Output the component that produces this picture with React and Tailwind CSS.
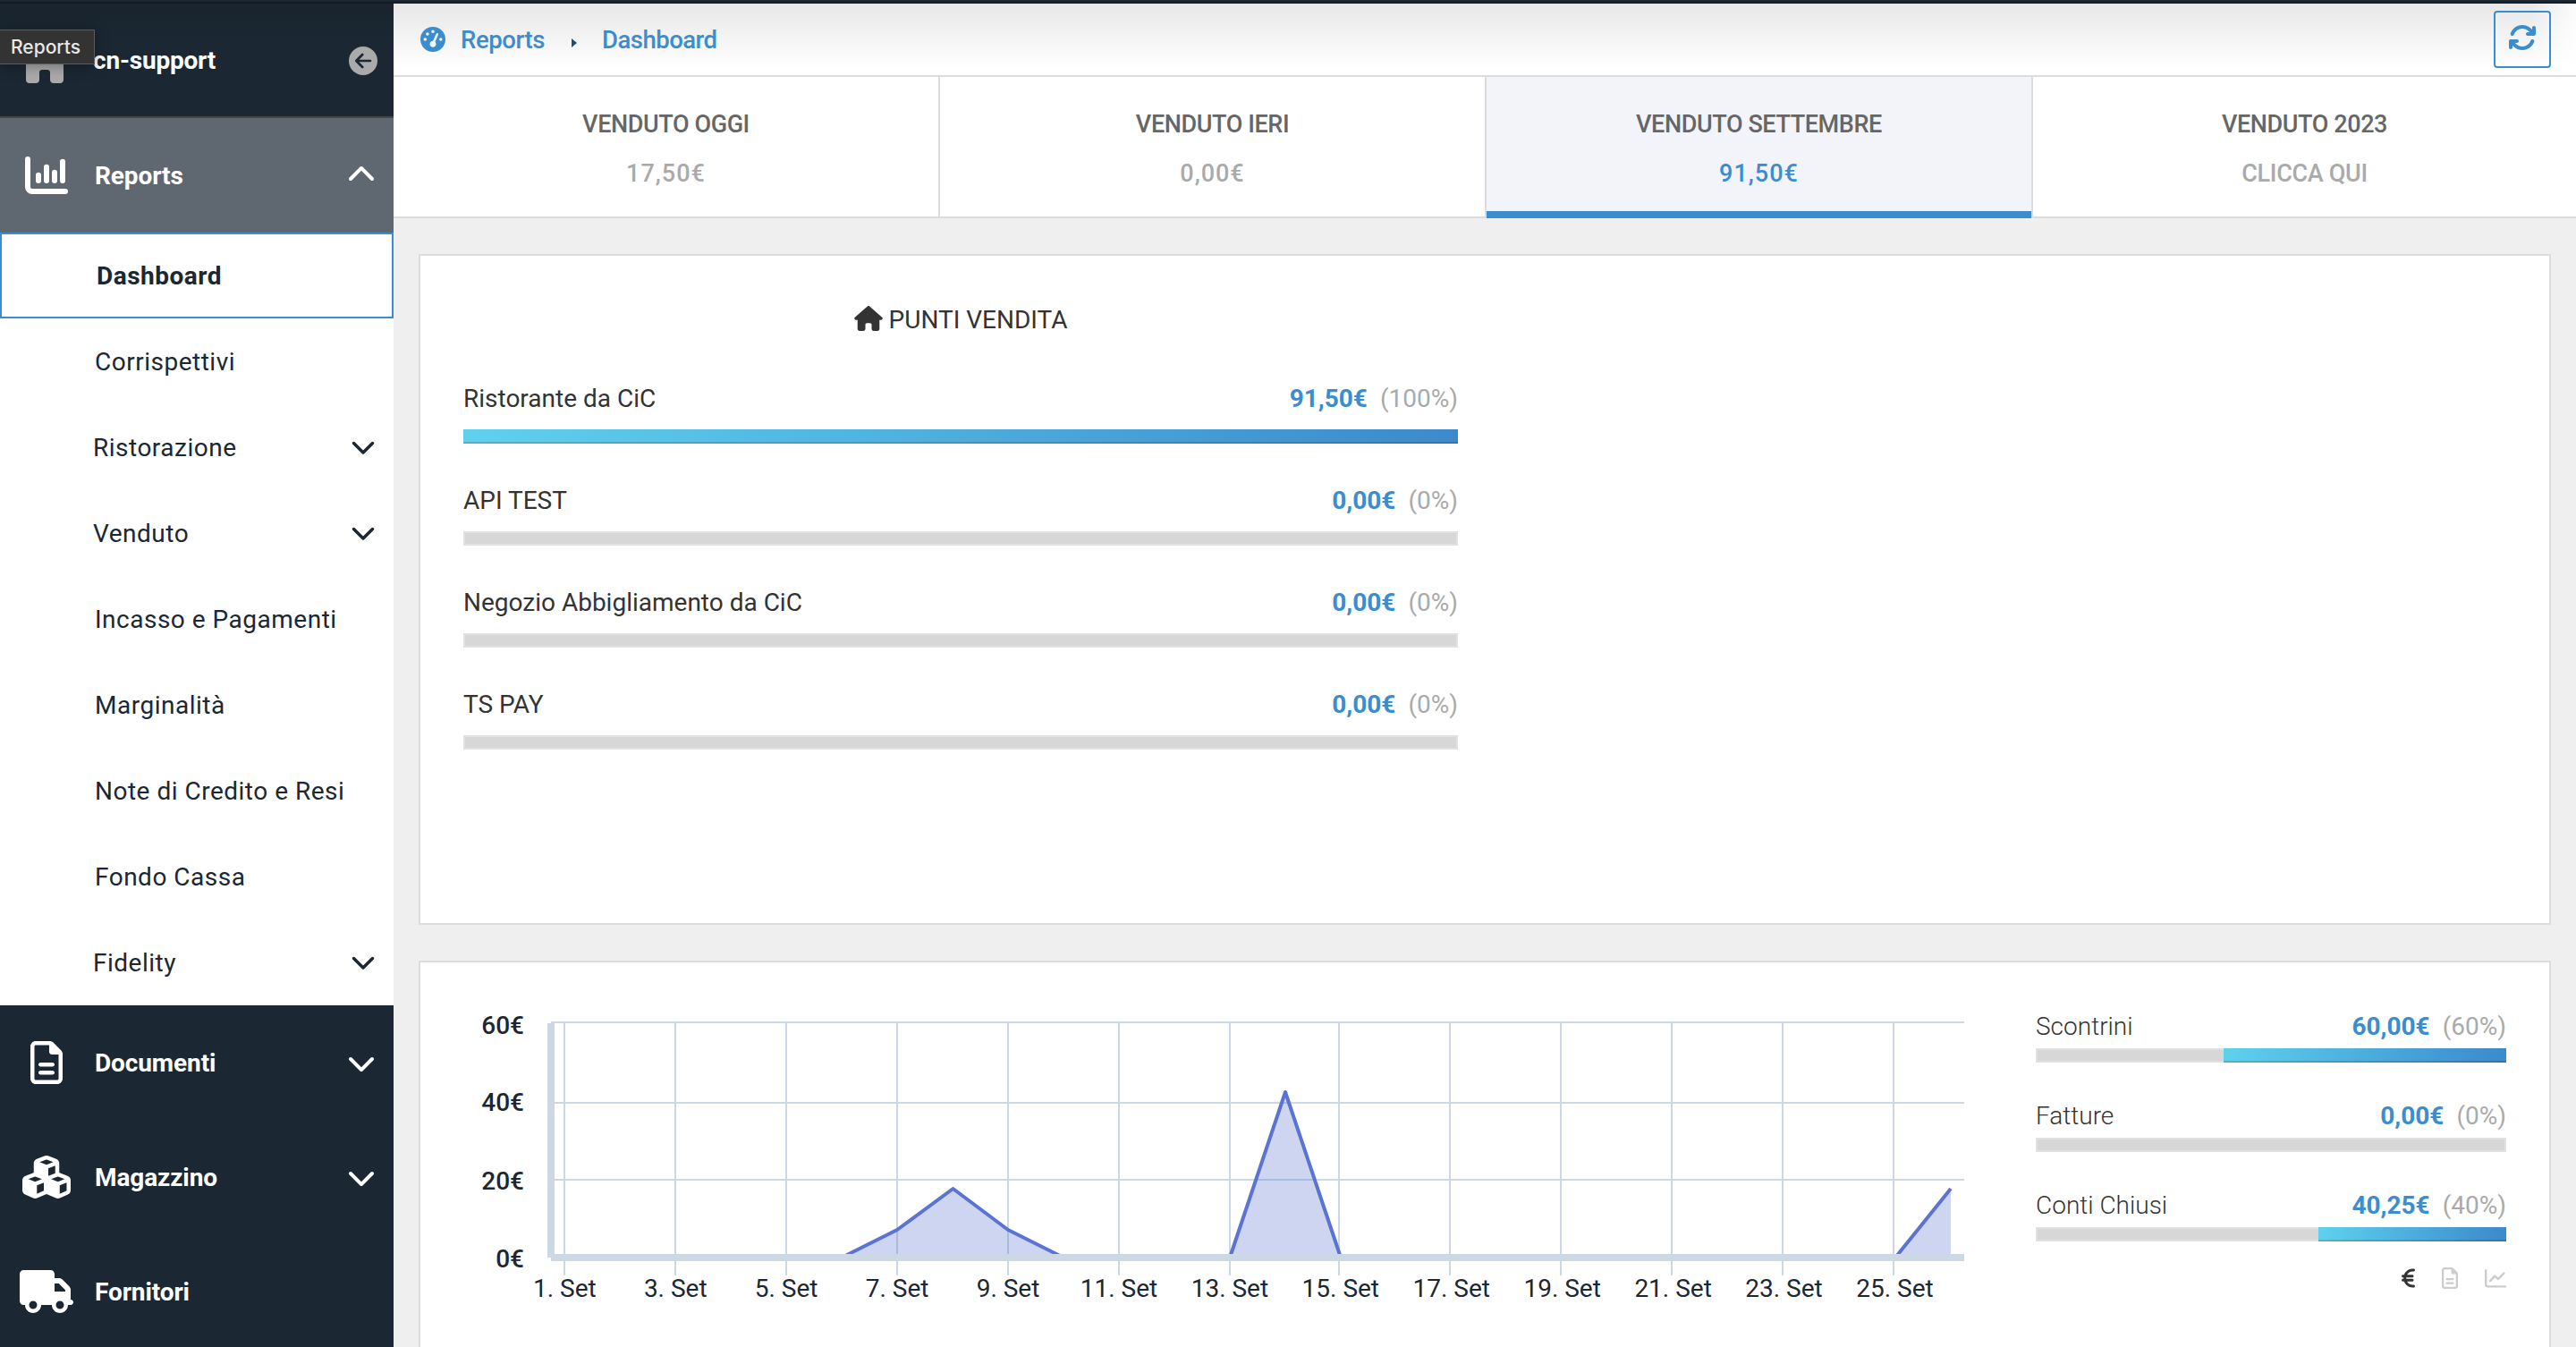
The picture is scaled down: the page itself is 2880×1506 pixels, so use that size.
import {
  FaHouse,
  FaGaugeHigh,
  FaTruck,
  FaEuroSign,
  FaCubes,
  FaArrowsRotate,
  FaRegFileLines,
  FaChevronDown,
  FaChevronUp,
} from "react-icons/fa6";

function BarsIcon() {
  return (
    <svg width="48" height="42" viewBox="0 0 48 42" fill="none" stroke="currentColor" strokeWidth="6" strokeLinecap="round">
      <path d="M3 3V34a5 5 0 0 0 5 5H45" />
      <path d="M15 20.7V27M24 11.7V27M33 17.7V27M42 5.7V27" />
    </svg>
  );
}

function CollapseIcon() {
  return (
    <svg width="32" height="32" viewBox="0 0 32 32" fill="none" className="mt-[2px]">
      <circle cx="16" cy="16" r="16" fill="#aaaaaa" />
      <path d="M24 16H8.8M15.2 9L8.3 16L15.2 23" stroke="#1b2833" strokeWidth="2.7" strokeLinecap="round" strokeLinejoin="round" />
    </svg>
  );
}

function TrendIcon() {
  return (
    <svg width="24" height="21" viewBox="0 0 24 21" fill="none" stroke="currentColor" strokeWidth="2.4" strokeLinecap="round" strokeLinejoin="round">
      <path d="M1.2 1.2V17a2.4 2.4 0 0 0 2.4 2.4H22.8" />
      <path d="M6.2 13L11.2 7.6L15 11L21.4 4.6" />
    </svg>
  );
}

function TopItem({ icon, label, chevron, active }) {
  return (
    <div className={"flex h-32 shrink-0 items-center pr-5 text-white " + (active ? "bg-[#5f6870]" : "")}>
      <div className="flex w-[104px] shrink-0 items-center justify-center">{icon}</div>
      <div className="flex-1 pt-[2px] pl-[2px] text-[28px] font-bold tracking-[-0.1px] whitespace-nowrap">{label}</div>
      {chevron}
    </div>
  );
}

function SubItem({ label, group }) {
  return (
    <div className="flex h-24 items-center justify-between pr-5 pl-[104px] text-[28px] font-[450] tracking-[0.5px] text-[#1b2833]">
      <span className={"pt-[2px] whitespace-nowrap " + (group ? "" : "pl-[2px]")}>{label}</span>
      {group && <FaChevronDown size={28} className="-mt-[2px]" />}
    </div>
  );
}

function Sidebar() {
  return (
    <div className="flex w-[440px] shrink-0 flex-col bg-[#1b2833]">
      <div className="relative flex h-32 shrink-0 items-center border-b-2 border-[#464646] bg-linear-to-b from-[#19242e] to-[#1b2833] to-40% pr-[18px] text-white">
        <div className="flex w-[104px] shrink-0 justify-center pt-[3px] pr-1 text-[#aaaaaa]">
          <FaHouse size={48} className="w-[54px]" />
        </div>
        <div className="flex-1 pt-[2px] text-[28px] font-bold tracking-[-0.2px] whitespace-nowrap">cn-support</div>
        <CollapseIcon />
        <div className="absolute top-[29px] left-[-2px] flex h-[39px] w-[108px] items-center border border-[#5a5a5a] bg-[#333333] pl-[13px] font-['Inter',sans-serif] text-[21px] font-medium text-[#e8e8e8] shadow-[0_2px_16px_rgba(0,0,0,0.35)]">
          Reports
        </div>
      </div>
      <TopItem active icon={<BarsIcon />} label="Reports" chevron={<FaChevronUp size={32} />} />
      <div className="shrink-0 bg-white">
        <div className="flex h-24 items-center border-2 border-[#3c8dcd] pt-px pl-[106px] text-[28px] font-bold tracking-[0.5px] text-[#1b2833]">
          Dashboard
        </div>
        <SubItem label="Corrispettivi" />
        <SubItem label="Ristorazione" group />
        <SubItem label="Venduto" group />
        <SubItem label="Incasso e Pagamenti" />
        <SubItem label="Marginalità" />
        <SubItem label="Note di Credito e Resi" />
        <SubItem label="Fondo Cassa" />
        <SubItem label="Fidelity" group />
      </div>
      <TopItem icon={<FaRegFileLines size={48} />} label="Documenti" chevron={<FaChevronDown size={32} />} />
      <TopItem icon={<FaCubes size={54} />} label="Magazzino" chevron={<FaChevronDown size={32} />} />
      <TopItem icon={<FaTruck size={60} />} label="Fornitori" />
    </div>
  );
}

function Tab({ title, value, active, last }) {
  return (
    <div
      className={
        "flex flex-col items-center pt-[35px] text-[27px] leading-9 font-medium whitespace-nowrap " +
        (last ? "flex-1 " : "w-[611px] shrink-0 border-r-2 border-[#dcdcdc] ") +
        (active ? "-mb-[2px] bg-[#f3f4f9] shadow-[inset_0_-8px_0_#3c8dcd]" : "")
      }
    >
      <span className="tracking-[-0.4px] text-[#666666]">{title}</span>
      <span className={"mt-[19px] " + (active ? "text-[#3c8dcd] " : "text-[#aaaaaa] ") + (last ? "tracking-[-0.3px]" : "tracking-[1px]")}>
        {value}
      </span>
    </div>
  );
}

function Metric({ label, value, pct, fill, compact }) {
  return (
    <div>
      <div className={"flex justify-between pt-px text-[28px] leading-8 whitespace-nowrap text-[#333333] " + (compact ? "font-light" : "")}>
        <span>{label}</span>
        <span>
          <b className="font-bold text-[#3c8dcd]">{value}</b>
          <span className="ml-[14px] font-normal text-[#aaaaaa]">{pct}</span>
        </span>
      </div>
      <div className={"flex h-4 justify-end bg-[#d7d7d7] shadow-[inset_0_0_0_2px_#e1e1e1] " + (compact ? "mt-2" : "mt-[18px]")}>
        <div
          className="h-4 bg-linear-to-r from-[#5fd1ee] to-[#3c8acb] shadow-[inset_0_-2px_0_rgba(0,0,0,0.15)]"
          style={{ width: `${fill}%` }}
        />
      </div>
    </div>
  );
}

const GRID_X = [631, 755, 879, 1003, 1127, 1251, 1375, 1497, 1621, 1745, 1869, 1993, 2117];
const Y_LABELS = [
  ["60€", 1155.5],
  ["40€", 1241.5],
  ["20€", 1329.5],
  ["0€", 1417],
];
const SERIES = "631,1406 941,1406 1003,1375 1065.5,1329 1127,1375 1189,1406 1375,1406 1437,1221 1499,1406 2119,1406 2181,1329";

function Chart() {
  return (
    <svg width="1740" height="430" viewBox="470 1076 1740 430" className="shrink-0 text-[28px]">
      <g fill="#ccd8e6">
        {GRID_X.map((x) => (
          <rect key={x} x={x - 1} y="1144" width="2" height="282" />
        ))}
        <rect x="616" y="1142" width="1580" height="2" />
        <rect x="616" y="1232" width="1580" height="2" />
        <rect x="616" y="1318" width="1580" height="2" />
      </g>
      <polygon points={SERIES + " 2181,1406"} fill="#5b73d2" fillOpacity="0.3" />
      <polyline points={SERIES} fill="none" stroke="#5b73d2" strokeWidth="4" strokeLinejoin="round" />
      <rect x="612" y="1144" width="8" height="262" fill="#ccd8e6" />
      <rect x="616" y="1402" width="1580" height="8" fill="#ccd8e6" />
      <g fill="#1b2833">
        {Y_LABELS.map(([t, y]) => (
          <text key={t} x="586" y={y} textAnchor="end" className="font-medium">
            {t}
          </text>
        ))}
        {GRID_X.map((x, i) => (
          <text key={x} x={631.3 + i * 123.93} y="1450" textAnchor="middle">
            {`${i * 2 + 1}. Set`}
          </text>
        ))}
      </g>
    </svg>
  );
}

export default function App() {
  return (
    <div className="flex h-[1506px] w-[2880px] flex-col overflow-hidden bg-[#efefef] font-['Roboto',sans-serif]">
      <div className="h-1 shrink-0 border-b-2 border-[#101b25] bg-[#1b2833]" />
      <div className="flex min-h-0 flex-1">
        <Sidebar />
        <div className="flex min-w-0 flex-1 flex-col">
          <div className="flex h-[82px] shrink-0 items-center border-b-2 border-[#dcdcdc] bg-white bg-[linear-gradient(to_right,transparent_2390px,rgba(255,255,255,0.85)_2440px),linear-gradient(to_bottom,#e7e7e7,#ffffff_90%)] pr-7 pl-[30px] text-[27.5px] text-[#3c8dcd]">
            <FaGaugeHigh size={28} className="-mt-px" />
            <span className="ml-[17px] w-[92px] pt-[2px] font-medium tracking-[-0.4px]">Reports</span>
            <svg width="6" height="10" viewBox="0 0 6 10" className="mt-2 ml-[32px]">
              <path d="M0 0L6 5L0 10Z" fill="#1f4e75" />
            </svg>
            <span className="ml-[28px] flex-1 pt-[2px] font-medium tracking-[-0.5px]">Dashboard</span>
            <div className="flex size-16 items-center justify-center rounded border-2 border-[#3c8dcd] pb-1">
              <FaArrowsRotate size={32} />
            </div>
          </div>
          <div className="flex h-[158px] shrink-0 border-b-2 border-[#dcdcdc] bg-white">
            <Tab title="VENDUTO OGGI" value="17,50€" />
            <Tab title="VENDUTO IERI" value="0,00€" />
            <Tab title="VENDUTO SETTEMBRE" value="91,50€" active />
            <Tab title="VENDUTO 2023" value="CLICCA QUI" last />
          </div>
          <div className="mx-7 mt-10 h-[750px] shrink-0 border-2 border-[#dcdcdc] bg-white px-12 pt-[54px]">
            <div className="w-[1112px]">
              <div className="flex h-8 items-center justify-center text-[28px] text-[#333333]">
                <FaHouse size={32} className="mr-[7px] h-7" />
                <span className="pt-[3px]">PUNTI VENDITA</span>
              </div>
              <div className="mt-[57px] flex flex-col gap-[47px]">
                <Metric label="Ristorante da CiC" value="91,50€" pct="(100%)" fill={100} />
                <Metric label="API TEST" value="0,00€" pct="(0%)" fill={0} />
                <Metric label="Negozio Abbigliamento da CiC" value="0,00€" pct="(0%)" fill={0} />
                <Metric label="TS PAY" value="0,00€" pct="(0%)" fill={0} />
              </div>
            </div>
          </div>
          <div className="mx-7 mt-10 flex h-[440px] shrink-0 border-2 border-[#dcdcdc] bg-white">
            <Chart />
            <div className="ml-[66px] w-[526px] pt-[55px]">
              <div className="flex flex-col gap-[43px]">
                <Metric compact label="Scontrini" value="60,00€" pct="(60%)" fill={60} />
                <Metric compact label="Fatture" value="0,00€" pct="(0%)" fill={0} />
                <Metric compact label="Conti Chiusi" value="40,25€" pct="(40%)" fill={40} />
              </div>
              <div className="mt-[29px] flex items-center justify-end text-[#cccccc]">
                <FaEuroSign size={24} className="w-[15px] text-[#333333]" />
                <FaRegFileLines size={24} className="ml-[30px] w-[18px]" />
                <div className="ml-[30px]">
                  <TrendIcon />
                </div>
              </div>
            </div>
          </div>
        </div>
      </div>
    </div>
  );
}
